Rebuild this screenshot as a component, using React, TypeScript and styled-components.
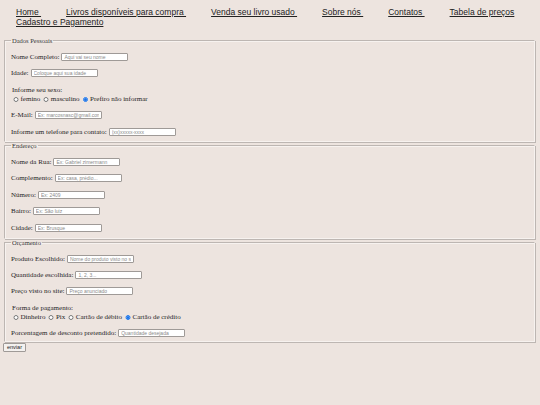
import React from 'react';
import styled, { createGlobalStyle } from 'styled-components';

const GlobalStyle = createGlobalStyle`
    html, body {
        margin: 0;
        padding: 0;
        background: #ede4df;
    }
    body {
        width: 540px;
        height: 405px;
        overflow: hidden;
        font-family: "Liberation Serif", "Times New Roman", serif;
        color: #1f1f1f;
    }
`;

const Nav = styled.nav`
    padding: 8px 0 0 16px;
    font-family: "Liberation Sans", Arial, sans-serif;
    font-size: 8.5px;
    line-height: 9.5px;
`;
const NavLink = styled.a`
    display: inline-block;
    color: #222;
    text-decoration: underline;
    margin-right: 25px;
    white-space: pre;
`;

const Form = styled.form`
    margin-top: 10px;
    padding: 0 5px 0 3px;
`;
const Box = styled.fieldset<{ $bottom?: number }>`
    margin: 0 0 0 1px;
    padding: 8px 6px ${(p) => p.$bottom ?? 6}px 6px;
    border-style: solid;
    border-width: 1px;
    border-color: #bdb6b2 #f7f2ef #f7f2ef #bdb6b2;
    box-shadow: inset 1px 1px 0 #f7f2ef, 1px 1px 0 #bdb6b2;
`;
const Legend = styled.legend`
    font-size: 6.5px;
    line-height: 7px;
    padding: 0 1px;
    color: #333;
`;
const Fields = styled.div`
    display: grid;
    row-gap: 6.4px;
`;
const Row = styled.div`
    font-size: 7px;
    line-height: 10px;
    height: 10px;
    display: flex;
    align-items: center;
`;
const Label = styled.label`
    margin-right: 2px;
    white-space: nowrap;
`;
const Field = styled.input`
    box-sizing: border-box;
    width: 67px;
    height: 8px;
    padding: 0 2px;
    margin: 0;
    border: 1px solid #9f9a97;
    border-radius: 1px;
    background: #fff;
    font-family: "Liberation Sans", Arial, sans-serif;
    font-size: 5px;
    &::placeholder {
        color: #8a8a8a;
    }
`;
const Group = styled.div`
    padding: 1px 0 0 1px;
    font-size: 7px;
    line-height: 9px;
`;
const Options = styled.div`
    display: flex;
    align-items: center;
`;
const Radio = styled.input`
    width: 5.5px;
    height: 5.5px;
    margin: 0 2px 0 1px;
    accent-color: #1a73e8;
`;
const OptionText = styled.span`
    margin-right: 2px;
`;
const SendButton = styled.button`
    display: block;
    margin: 1px 0 0 0;
    padding: 0 3px;
    height: 9px;
    font-family: "Liberation Sans", Arial, sans-serif;
    font-size: 5.5px;
    line-height: 7px;
    color: #222;
    background: #f4f1ef;
    border: 1px solid #9f9a97;
    border-radius: 1px;
`;

const links = [
    'Home ',
    'Livros disponíveis para compra ',
    'Venda seu livro usado ',
    'Sobre nós ',
    'Contatos ',
    'Tabela de preços',
    'Cadastro e Pagamento',
];

function Input({ label, hint }: { label: string; hint: string }): JSX.Element {
    return (
        <Row>
            <Label>{label}</Label>
            <Field placeholder={hint} />
        </Row>
    );
}

function Choice({ title, name, items, checked }: { title: string; name: string; items: string[]; checked: number }): JSX.Element {
    return (
        <Group>
            <div>{title}</div>
            <Options>
                {items.map((item, i) => (
                    <React.Fragment key={item}>
                        <Radio type="radio" name={name} defaultChecked={i === checked} />
                        <OptionText>{item}</OptionText>
                    </React.Fragment>
                ))}
            </Options>
        </Group>
    );
}

export default function App(): JSX.Element {
    return (
        <>
            <GlobalStyle />
            <Nav>
                {links.map((l) => (
                    <NavLink key={l} href="#">
                        {l}
                    </NavLink>
                ))}
            </Nav>
            <Form onSubmit={(e) => e.preventDefault()}>
                <Box $bottom={4.5}>
                    <Legend>Dados Pessoais</Legend>
                    <Fields>
                        <Input label="Nome Completo:" hint="Aqui vai seu nome" />
                        <Input label="Idade:" hint="Coloque aqui sua idade" />
                        <Choice title="Informe seu sexo:" name="sexo" items={['femino', 'masculino', 'Prefiro não informar']} checked={2} />
                        <Input label="E-Mail:" hint="Ex: marcosnasc@gmail.com" />
                        <Input label="Informe um telefone para contato:" hint="(xx)xxxxx-xxxx" />
                    </Fields>
                </Box>
                <Box $bottom={5}>
                    <Legend>Endereço</Legend>
                    <Fields>
                        <Input label="Nome da Rua:" hint="Ex: Gabriel zimermann" />
                        <Input label="Complemento:" hint="Ex: casa, prédio..." />
                        <Input label="Número:" hint="Ex: 2409" />
                        <Input label="Bairro:" hint="Ex: São luiz" />
                        <Input label="Cidade:" hint="Ex: Brusque" />
                    </Fields>
                </Box>
                <Box $bottom={2.5}>
                    <Legend>Orçamento</Legend>
                    <Fields>
                        <Input label="Produto Escolhido:" hint="Nome do produto visto no site" />
                        <Input label="Quantidade escolhida:" hint="1, 2, 3..." />
                        <Input label="Preço visto no site:" hint="Preço anunciado" />
                        <Choice title="Forma de pagamento:" name="pagamento" items={['Dinheiro', 'Pix', 'Cartão de débito', 'Cartão de crédito']} checked={3} />
                        <Input label="Porcentagem de desconto pretendido:" hint="Quantidade desejada" />
                    </Fields>
                </Box>
                <SendButton type="submit">enviar</SendButton>
            </Form>
        </>
    );
}
